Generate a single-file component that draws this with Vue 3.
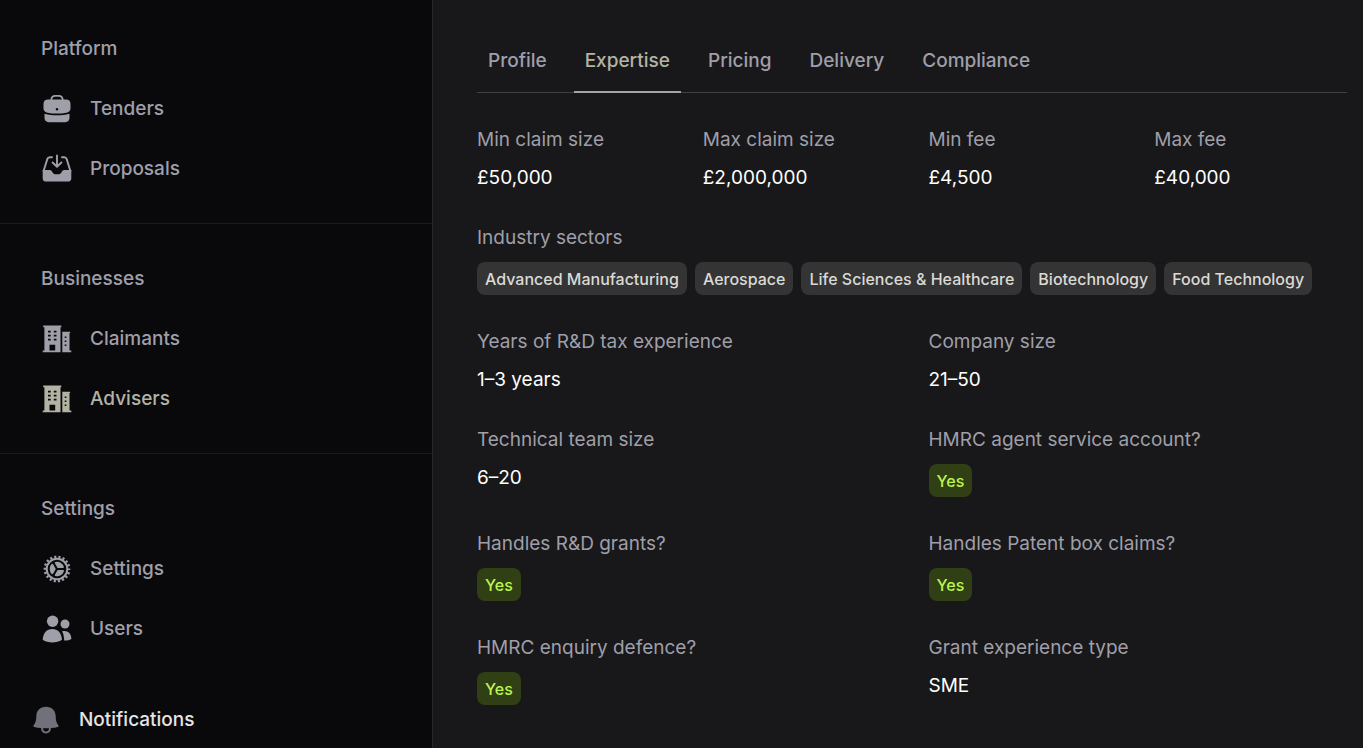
<template>
  <div class="layout">
    <aside class="sidebar">
      <nav v-for="section in sections" :key="section.title" class="nav-section">
        <h2 class="nav-title">{{ section.title }}</h2>
        <a
          v-for="item in section.items"
          :key="item.name"
          href="#"
          class="nav-item"
          :class="{ active: item.name === currentPage }"
          @click.prevent="currentPage = item.name"
        >
          <svg v-if="item.icon === 'briefcase'" class="nav-icon" viewBox="0 0 30 30" aria-hidden="true">
            <path d="M9.200 6.200C9.400 3 10.500 1.900 13.200 1.900h3.600c2.700 0 3.800 1.100 4 4.300" fill="none" stroke="currentColor" stroke-width="1.700" />
            <path
              fill-rule="evenodd"
              d="M6 5.500h18c2.800 0 4.500 1.600 4.500 4.200v4.500c0 2-1 3.500-3 4.200-7 1.600-14 1.600-21 0-2-.7-3-2.200-3-4.200V9.700C1.500 7.100 3.200 5.500 6 5.500zM15 14a1.300 1.300 0 1 0 0 2.600 1.300 1.300 0 0 0 0-2.600z"
            />
            <path d="M2.500 19.700c8.300 2.200 16.700 2.200 25 0v4.100c0 2.800-1.600 4.400-4.400 4.400H6.900c-2.800 0-4.400-1.600-4.400-4.400z" />
          </svg>
          <svg v-else-if="item.icon === 'inbox'" class="nav-icon" viewBox="0 0 30 30" aria-hidden="true">
            <path
              d="M10 3.200H7.800c-1.300 0-2.100.7-2.500 1.900L1.600 17M20 3.200h2.200c1.300 0 2.100.7 2.500 1.900L28.400 17M15 1.500v11M10.600 8.500l4.400 4.300 4.400-4.300"
              fill="none"
              stroke="currentColor"
              stroke-width="1.900"
              stroke-linecap="round"
              stroke-linejoin="round"
            />
            <path d="M.7 16h7c1.300 0 2.100.8 2.600 1.900.7 1.500 2 2.400 3.700 2.400h2c1.700 0 3-.9 3.700-2.400.5-1.100 1.300-1.900 2.600-1.900h7v8.200c0 2.200-1.300 3.400-3.500 3.400H4.200C2 27.600.7 26.400.7 24.200z" />
          </svg>
          <svg v-else-if="item.icon === 'buildings'" class="nav-icon" viewBox="0 0 30 30" aria-hidden="true">
            <path
              fill-rule="evenodd"
              d="M1.200 1.500h18.100v1.800h-.8v25H.7v-1.700h1.700V3.300H1.200zM6 6.800v1.700h2.700V6.800zm5.800 0v1.700h2.700V6.800zM6 10.800v1.700h2.700v-1.700zm5.800 0v1.700h2.700v-1.700zM6 14.800v1.700h2.700v-1.700zm5.800 0v1.700h2.700v-1.700zM7.500 20.800v5.800h5.700v-5.800z"
            />
            <path
              fill-rule="evenodd"
              d="M20.300 7.800h7.800v1.300h-.6v17.500h1.800v1.700h-9zM22.700 12.400v1.700h1.700v-1.700zm0 4v1.700h1.700v-1.700zm0 4v1.700h1.700v-1.700z"
            />
          </svg>
          <svg v-else-if="item.icon === 'cog'" class="nav-icon" viewBox="0 0 30 30" aria-hidden="true">
            <g fill="none" stroke="currentColor">
              <circle cx="15" cy="15" r="10.300" stroke-width="2" />
              <circle cx="15" cy="15" r="12.200" stroke-width="2.400" stroke-dasharray="2.100 2.159" stroke-dashoffset="1.050" />
            </g>
            <g transform="translate(15 15) scale(1.385) translate(-12 -12)">
              <path d="M17.004 10.407c.138.435-.216.842-.672.842h-3.465a.75.75 0 0 1-.65-.375l-1.732-3c-.229-.396-.053-.907.393-1.004a5.252 5.252 0 0 1 6.126 3.537z" />
              <path d="M8.120 8.464c.307-.338.838-.235 1.066.16l1.732 3a.75.75 0 0 1 0 .75l-1.732 3.001c-.229.396-.76.498-1.067.16A5.231 5.231 0 0 1 6.750 12c0-1.362.519-2.603 1.370-3.536z" />
              <path d="M10.878 17.130c-.447-.097-.623-.608-.394-1.003l1.733-3.003a.75.75 0 0 1 .65-.375h3.465c.457 0 .81.408.672.843a5.252 5.252 0 0 1-6.126 3.538z" />
            </g>
          </svg>
          <svg v-else class="nav-icon" viewBox="0 0 30 30" aria-hidden="true">
            <circle cx="10.600" cy="7.300" r="5.700" />
            <circle cx="23" cy="10" r="4.500" />
            <path d="M.7 25.700C1.200 18.900 4.800 15 10.300 15s9.200 3.900 9.700 10.700c-2.600 1.800-6 2.700-9.700 2.700s-7-.9-9.600-2.700zM20.100 17.300c4.900-1.500 9.200 1.500 9.300 7.600-2.100 1.200-4.500 1.800-7.200 1.700-.1-3.600-.7-6.700-2.100-9.300z" />
          </svg>
          <span>{{ item.name }}</span>
        </a>
      </nav>
      <a href="#" class="notifications" @click.prevent>
        <svg class="bell-icon" viewBox="0 0 26 28" aria-hidden="true">
          <path
            fill-rule="evenodd"
            d="M13 .8c5.800 0 9.700 4 9.700 9.600 0 4.200.8 6.500 2.700 8.800.5.700.2 1.400-.6 1.700-2 .6-4.400 1-6.900 1.200 0 3.300-1.900 5.400-4.900 5.400s-4.900-2.100-4.900-5.400c-2.500-.2-4.900-.6-6.900-1.200-.8-.3-1.100-1-.6-1.700 1.900-2.300 2.700-4.600 2.700-8.800C3.300 4.800 7.200.8 13 .8zM10 22.300c0 1.900 1.100 3.200 3 3.200s3-1.300 3-3.200z"
          />
        </svg>
        <span>Notifications</span>
      </a>
    </aside>

    <main class="content">
      <div class="tabs" role="tablist">
        <button
          v-for="tab in tabs"
          :key="tab"
          type="button"
          role="tab"
          class="tab"
          :class="{ active: tab === currentTab }"
          :aria-selected="tab === currentTab"
          @click="currentTab = tab"
        >
          {{ tab }}
        </button>
      </div>

      <dl class="details">
        <div v-for="field in fields" :key="field.label" class="field" :class="field.size">
          <dt>{{ field.label }}</dt>
          <dd v-if="field.tags" class="badges">
            <span v-for="tag in field.tags" :key="tag" class="badge">{{ tag }}</span>
          </dd>
          <dd v-else-if="field.value === true" class="badges">
            <span class="badge badge-yes">Yes</span>
          </dd>
          <dd v-else>{{ field.value }}</dd>
        </div>
      </dl>
    </main>
  </div>
</template>

<script setup>
import { ref } from 'vue'

const currentPage = ref('Advisers')
const currentTab = ref('Expertise')

const sections = [
  {
    title: 'Platform',
    items: [
      { name: 'Tenders', icon: 'briefcase' },
      { name: 'Proposals', icon: 'inbox' }
    ]
  },
  {
    title: 'Businesses',
    items: [
      { name: 'Claimants', icon: 'buildings' },
      { name: 'Advisers', icon: 'buildings' }
    ]
  },
  {
    title: 'Settings',
    items: [
      { name: 'Settings', icon: 'cog' },
      { name: 'Users', icon: 'users' }
    ]
  }
]

const tabs = ['Profile', 'Expertise', 'Pricing', 'Delivery', 'Compliance']

const fields = [
  { label: 'Min claim size', value: '£50,000', size: 'quarter' },
  { label: 'Max claim size', value: '£2,000,000', size: 'quarter' },
  { label: 'Min fee', value: '£4,500', size: 'quarter' },
  { label: 'Max fee', value: '£40,000', size: 'quarter' },
  {
    label: 'Industry sectors',
    tags: ['Advanced Manufacturing', 'Aerospace', 'Life Sciences & Healthcare', 'Biotechnology', 'Food Technology'],
    size: 'full'
  },
  { label: 'Years of R&D tax experience', value: '1–3 years', size: 'half' },
  { label: 'Company size', value: '21–50', size: 'half' },
  { label: 'Technical team size', value: '6–20', size: 'half' },
  { label: 'HMRC agent service account?', value: true, size: 'half' },
  { label: 'Handles R&D grants?', value: true, size: 'half' },
  { label: 'Handles Patent box claims?', value: true, size: 'half' },
  { label: 'HMRC enquiry defence?', value: true, size: 'half' },
  { label: 'Grant experience type', value: 'SME', size: 'half' }
]
</script>

<style>
body {
  margin: 0;
  background: #18181a;
}
</style>

<style scoped>
.layout {
  display: flex;
  min-height: 100vh;
  font-family: Inter, "Liberation Sans", sans-serif;
  font-size: 19px;
  line-height: 30px;
  color: #9f9fa9;
}
.sidebar {
  box-sizing: border-box;
  width: 433px;
  flex-shrink: 0;
  background: #09090b;
  border-right: 1px solid #27272a;
}
.nav-section {
  padding: 40px 30px 24px;
  border-bottom: 1px solid #1b1b1e;
}
.nav-section:first-child {
  padding-top: 34px;
}
.nav-section:nth-child(3) {
  padding-bottom: 31px;
  border-bottom: none;
}
.nav-title {
  margin: 0 0 15px;
  padding: 0 11px;
  font-size: 19px;
  font-weight: 500;
}
.nav-item {
  display: flex;
  align-items: center;
  gap: 18px;
  height: 60px;
  padding: 0 12px;
  font-weight: 500;
  color: inherit;
  text-decoration: none;
}
.nav-item.active {
  color: #b3b3a3;
}
.nav-icon {
  width: 30px;
  height: 30px;
  fill: currentColor;
}
.notifications {
  display: flex;
  align-items: center;
  gap: 20px;
  height: 60px;
  padding: 0 33px;
  font-weight: 500;
  color: #e4e4e7;
  text-decoration: none;
}
.bell-icon {
  width: 26px;
  height: 28px;
  fill: #71717b;
}
.content {
  flex: 1;
  min-width: 0;
  padding: 29px 16px 29px 44px;
}
.tabs {
  display: flex;
  border-bottom: 1px solid #3f3f46;
}
.tab {
  margin: 0 0 -1px;
  padding: 17px 11px 15px;
  border: none;
  border-bottom: 2px solid transparent;
  background: none;
  font-family: inherit;
  font-size: 19px;
  font-weight: 500;
  line-height: 30px;
  color: inherit;
  cursor: pointer;
}
.tab + .tab {
  margin-left: 16px;
}
.tab.active {
  color: #b3b3a3;
  border-bottom-color: #a3a3a3;
}
.details {
  display: grid;
  grid-template-columns: repeat(4, 1fr);
  gap: 30px 33px;
  margin: 32px 0 0;
}
.quarter {
  grid-column: span 1;
}
.half {
  grid-column: span 2;
}
.full {
  grid-column: span 4;
}
dd {
  margin: 8px 0 0;
  color: #fff;
}
.badges {
  display: flex;
  flex-wrap: wrap;
  gap: 8px;
  padding: 1px 0 2px;
}
.badge {
  padding: 5px 8px 3px;
  border-radius: 8px;
  background: #343434;
  font-size: 16px;
  font-weight: 500;
  line-height: 25px;
  color: #dadad5;
}
.badge-yes {
  background: #313f14;
  color: #bbf451;
}
</style>
